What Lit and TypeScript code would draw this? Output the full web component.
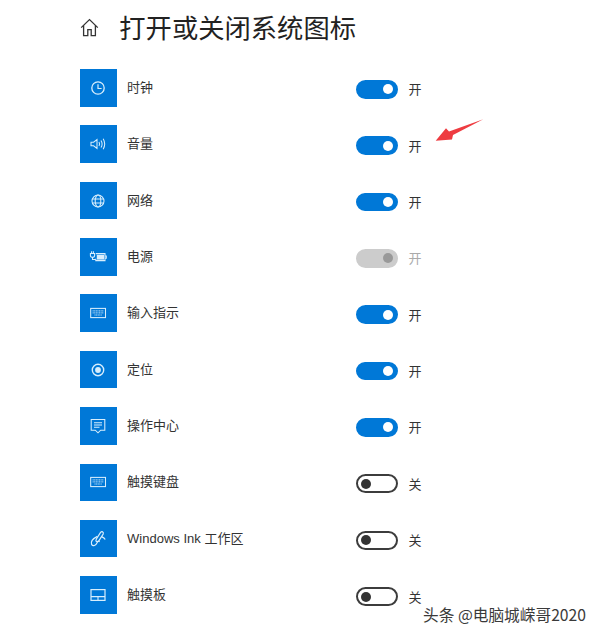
import { LitElement, html, css, svg } from "lit";
import { customElement } from "lit/decorators.js";

const kb = svg`<rect x="2.7" y="5.4" width="14.8" height="9.2"/><path d="M4.6 7.9h11M4.6 9.9h11M6.5 12h7.2" stroke-dasharray="1.1 .5" stroke-width=".9"/>`;
const icons: Record<string, unknown> = {
  clock: svg`<circle cx="10" cy="10" r="6.2" stroke-width="1.3"/><path d="M10 6.2V10.5H13.6" stroke-width="1.2"/>`,
  speaker: svg`<path d="M3 8.2H5.6L9 5.5V14.5L5.6 11.8H3Z"/><path d="M11 8q1.2 2 0 4M13 6.4q2.2 3.6 0 7.2M15.2 4.8q3 5.2 0 10.4"/>`,
  globe: svg`<circle cx="10" cy="10" r="6"/><ellipse cx="10" cy="10" rx="2.8" ry="6"/><path d="M4.3 8h11.4M4.3 12h11.4"/>`,
  power: svg`<path d="M7.8 6.6H17V13.6H7.8V11.8"/><path d="M17 9H18.3V11.2H17" /><path d="M2.4 6.4H6.6V8.4Q6.6 10.2 4.5 10.2T2.4 8.4ZM3.6 6.4V4.2M5.4 6.4V4.2M4.5 10.2V12.4L7.8 12.4"/><rect x="8.8" y="7.8" width="7.2" height="4.8" fill="currentColor" stroke="none"/>`,
  keyboard: kb,
  location: svg`<circle cx="10" cy="10" r="5.7" stroke-width="1.4"/><circle cx="10" cy="10" r="2.9" fill="currentColor" stroke="none"/>`,
  action: svg`<path d="M3.2 3.4H16.8V14.2H12.7L10 16.8 7.3 14.2H3.2Z"/><path d="M6 6.8H14M6 9H14M6 11.2H11.5"/>`,
  pen: svg`<path d="M14.2 2.6q1.6.6 1 2.4L11 11.6q-1.6 1.6-2.6 1t0-2.6L12.4 3.6q1-1.3 1.8-1Z" stroke-width="1.2"/><path d="M9.4 7.4C5.4 9.4 2.6 12.6 3.6 15.4c1.2 2.2 4.4 1.2 5.6-1.8.6-1.8 2-1.8 2.2-.4M13.6 7.6c1.6.8 3 1.6 3.6 3" stroke-width="1.2"/>`,
  touchpad: svg`<rect x="3" y="4.6" width="14" height="10.8" stroke-width="1.2"/><path d="M3 11.6H17M10 11.6V15.4" stroke-width="1.1"/>`,
};

const rows = [
  { icon: "clock", label: "时钟", state: "on" },
  { icon: "speaker", label: "音量", state: "on" },
  { icon: "globe", label: "网络", state: "on" },
  { icon: "power", label: "电源", state: "disabled" },
  { icon: "keyboard", label: "输入指示", state: "on" },
  { icon: "location", label: "定位", state: "on" },
  { icon: "action", label: "操作中心", state: "on" },
  { icon: "keyboard", label: "触摸键盘", state: "off" },
  { icon: "pen", label: "Windows Ink 工作区", state: "off" },
  { icon: "touchpad", label: "触摸板", state: "off" },
];

@customElement("app-root")
export class AppRoot extends LitElement {
  static styles = css`
    :host {
      display: block;
      position: relative;
      width: 600px;
      height: 636px;
      overflow: hidden;
      background: #fff;
      font-family: "Liberation Sans", "Noto Sans CJK SC", sans-serif;
      color: #2b2b2b;
    }
    .page { padding: 10px 0 0 79.5px; }
    .head { display: flex; align-items: center; height: 34px; margin-bottom: 25px; }
    .home { width: 20px; height: 20px; margin-right: 20.5px; fill: none; stroke: #333; stroke-width: 1.3; }
    h1 { margin: 0 0 0 -0.7px; font: 400 26.3px/34px "Noto Sans CJK SC", sans-serif; color: #222; white-space: nowrap; }
    .list { display: flex; flex-direction: column; gap: 18.77px; }
    .row { display: flex; align-items: center; height: 37.6px; }
    .tile {
      width: 37.6px; height: 37.6px; flex: none;
      background: #0078d7; color: #d8eefd;
      display: flex; align-items: center; justify-content: center;
    }
    .tile svg { width: 20px; height: 20px; fill: none; stroke: currentColor; stroke-width: 1.05; }
    .label { width: 229px; margin-left: 10px; font-size: 13px; line-height: 18px; color: #333; white-space: nowrap; flex: none; }
    .toggle {
      box-sizing: border-box; width: 41.5px; height: 18.8px; margin-top: 3px;
      border-radius: 10px; border: 2px solid #3c3c3c; background: #fff;
      display: flex; align-items: center; padding: 0 3px; flex: none;
    }
    .knob { width: 10px; height: 10px; border-radius: 50%; background: #333; }
    .on { background: #0078d7; border-color: #0078d7; justify-content: flex-end; }
    .on .knob { background: #fff; }
    .disabled { background: #ccc; border-color: #ccc; justify-content: flex-end; }
    .disabled .knob { background: #999; }
    .state { margin: 5px 0 0 11px; font-size: 13px; line-height: 18px; color: #333; }
    .state.dim { color: #aaa; }
    .arrow { position: absolute; left: 430px; top: 114px; width: 60px; height: 32px; }
    .mark {
      position: absolute; left: 423px; top: 604.5px;
      font: 15.7px/20px "Noto Sans CJK SC", sans-serif; color: #3a3a3a; white-space: nowrap;
      text-shadow: 0 0 2px #fff, 1px 1px 1px #fff, -1px -1px 1px #fff;
    }
  `;

  render() {
    return html`
      <div class="page">
        <div class="head">
          <svg class="home" viewBox="0 0 20 20">
            <path d="M1.2 10.6 9.5 2.6l8.3 8M3.6 8.6V18.6H7.8V12.6H11.2V18.6H15.4V8.6"/>
          </svg>
          <h1>打开或关闭系统图标</h1>
        </div>
        <div class="list">
          ${rows.map(
            (r) => html`
              <div class="row">
                <div class="tile"><svg viewBox="0 0 20 20">${icons[r.icon]}</svg></div>
                <div class="label">${r.label}</div>
                <div class="toggle ${r.state}"><div class="knob"></div></div>
                <div class="state ${r.state === "disabled" ? "dim" : ""}">${r.state === "off" ? "关" : "开"}</div>
              </div>
            `
          )}
        </div>
      </div>
      <svg class="arrow" viewBox="0 0 60 32">
        <path d="M5.7 26.7 16 14.3 19 17.5 53.3 5.3 23 21 22 25.5Z" fill="#ee3c41"/>
      </svg>
      <div class="mark">头条 @电脑城嵘哥2020</div>
    `;
  }
}
